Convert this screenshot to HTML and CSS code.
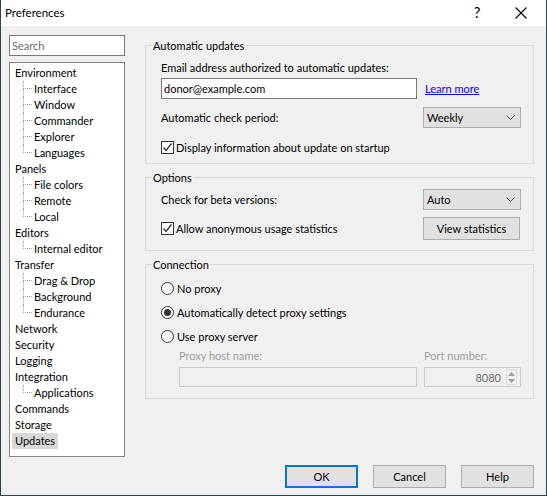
FILE: index.html
```html
<!DOCTYPE html>
<html>
<head>
<meta charset="utf-8">
<title>Preferences</title>
<link rel="stylesheet" href="styles.css">
</head>
<body>
<div class="window">
  <div class="titlebar">
    <span class="title">Preferences</span>
    <span class="tb-help">?</span>
    <span class="tb-close"><svg width="12" height="12" viewBox="0 0 12 12"><path d="M0.5 0.5 L11.5 11.5 M11.5 0.5 L0.5 11.5" stroke="#000" stroke-width="1.1" fill="none"/></svg></span>
  </div>
  <div class="main">
    <div class="sidebar">
      <div class="search">Search</div>
      <div class="tree">
        <div class="node"><span class="lbl">Environment</span></div>
        <div class="node child"><span class="conn"><span class="c-top"></span><span class="c-bot"></span></span><span class="lbl">Interface</span></div>
        <div class="node child"><span class="conn"><span class="c-top"></span><span class="c-bot"></span></span><span class="lbl">Window</span></div>
        <div class="node child"><span class="conn"><span class="c-top"></span><span class="c-bot"></span></span><span class="lbl">Commander</span></div>
        <div class="node child"><span class="conn"><span class="c-top"></span><span class="c-bot"></span></span><span class="lbl">Explorer</span></div>
        <div class="node child last"><span class="conn"><span class="c-top"></span><span class="c-bot"></span></span><span class="lbl">Languages</span></div>
        <div class="node"><span class="lbl">Panels</span></div>
        <div class="node child"><span class="conn"><span class="c-top"></span><span class="c-bot"></span></span><span class="lbl">File colors</span></div>
        <div class="node child"><span class="conn"><span class="c-top"></span><span class="c-bot"></span></span><span class="lbl">Remote</span></div>
        <div class="node child last"><span class="conn"><span class="c-top"></span><span class="c-bot"></span></span><span class="lbl">Local</span></div>
        <div class="node"><span class="lbl">Editors</span></div>
        <div class="node child last"><span class="conn"><span class="c-top"></span><span class="c-bot"></span></span><span class="lbl">Internal editor</span></div>
        <div class="node"><span class="lbl">Transfer</span></div>
        <div class="node child"><span class="conn"><span class="c-top"></span><span class="c-bot"></span></span><span class="lbl">Drag &amp; Drop</span></div>
        <div class="node child"><span class="conn"><span class="c-top"></span><span class="c-bot"></span></span><span class="lbl">Background</span></div>
        <div class="node child last"><span class="conn"><span class="c-top"></span><span class="c-bot"></span></span><span class="lbl">Endurance</span></div>
        <div class="node"><span class="lbl">Network</span></div>
        <div class="node"><span class="lbl">Security</span></div>
        <div class="node"><span class="lbl">Logging</span></div>
        <div class="node"><span class="lbl">Integration</span></div>
        <div class="node child last"><span class="conn"><span class="c-top"></span><span class="c-bot"></span></span><span class="lbl">Applications</span></div>
        <div class="node"><span class="lbl">Commands</span></div>
        <div class="node"><span class="lbl">Storage</span></div>
        <div class="node"><span class="lbl selected">Updates</span></div>
      </div>
    </div>
    <div class="content">
      <fieldset class="group g1">
        <legend>Automatic updates</legend>
        <div class="gbody">
          <div class="email-label">Email address authorized to automatic updates:</div>
          <div class="email-row">
            <div class="textbox email">donor@example.com</div>
            <a class="link" href="#">Learn more</a>
          </div>
          <div class="row period-row">
            <span>Automatic check period:</span>
            <div class="combo"><span>Weekly</span><svg width="9" height="5" viewBox="0 0 9 5"><path d="M0.5 0.5 L4.5 4.5 L8.5 0.5" stroke="#5a5a5a" stroke-width="1" fill="none"/></svg></div>
          </div>
          <div class="check-row">
            <span class="checkbox"><svg width="11" height="11" viewBox="0 0 11 11"><path d="M1.5 5.5 L4 8.5 L9.5 1.5" stroke="#333" stroke-width="1.3" fill="none"/></svg></span>
            <span>Display information about update on startup</span>
          </div>
        </div>
      </fieldset>
      <fieldset class="group g2">
        <legend>Options</legend>
        <div class="gbody">
          <div class="row beta-row">
            <span>Check for beta versions:</span>
            <div class="combo"><span>Auto</span><svg width="9" height="5" viewBox="0 0 9 5"><path d="M0.5 0.5 L4.5 4.5 L8.5 0.5" stroke="#5a5a5a" stroke-width="1" fill="none"/></svg></div>
          </div>
          <div class="row stats-row">
            <div class="check-row inline">
              <span class="checkbox"><svg width="11" height="11" viewBox="0 0 11 11"><path d="M1.5 5.5 L4 8.5 L9.5 1.5" stroke="#333" stroke-width="1.3" fill="none"/></svg></span>
              <span>Allow anonymous usage statistics</span>
            </div>
            <div class="button stats-btn">View statistics</div>
          </div>
        </div>
      </fieldset>
      <fieldset class="group g3">
        <legend>Connection</legend>
        <div class="gbody">
          <div class="radio-row first"><span class="radio"></span><span>No proxy</span></div>
          <div class="radio-row"><span class="radio on"><span class="dot"></span></span><span>Automatically detect proxy settings</span></div>
          <div class="radio-row"><span class="radio"></span><span>Use proxy server</span></div>
          <div class="proxy-grid">
            <span class="dis-label">Proxy host name:</span>
            <span class="dis-label">Port number:</span>
            <div class="textbox disabled"></div>
            <div class="textbox disabled port">
              <span class="port-val">8080</span>
              <span class="spin">
                <svg width="7" height="4" viewBox="0 0 7 4"><path d="M0 4 L3.5 0 L7 4 Z" fill="#a0a0a0"/></svg>
                <svg width="7" height="4" viewBox="0 0 7 4"><path d="M0 0 L3.5 4 L7 0 Z" fill="#a0a0a0"/></svg>
              </span>
            </div>
          </div>
        </div>
      </fieldset>
    </div>
  </div>
  <div class="buttons">
    <div class="button dlg default">OK</div>
    <div class="button dlg">Cancel</div>
    <div class="button dlg">Help</div>
  </div>
</div>
</body>
</html>
```

FILE: styles.css
```css
* { box-sizing: border-box; }
html, body { margin: 0; padding: 0; }
body {
  font-family: Lato, "Liberation Sans", sans-serif;
  font-size: 11px;
  line-height: 15px;
  color: #000;
  background: #fff;
}
.window {
  width: 547px;
  height: 496px;
  background: #f0f0f0;
  border: 1px solid #2e4451;
  border-top: none;
  display: flex;
  flex-direction: column;
}
.titlebar {
  height: 26px;
  background: #fff;
  display: flex;
  align-items: center;
  padding-left: 4px;
  font-size: 11.5px;
}
.title { flex: 1; padding-bottom: 1px; }
.tb-help {
  font-size: 15px;
  width: 46px;
  text-align: center;
  margin-right: 0;
  padding-bottom: 1px;
}
.tb-close {
  width: 46px;
  display: flex;
  justify-content: center;
  align-items: center;
  padding-right: 4px;
}
.main {
  display: flex;
  padding: 9px 0 0 8px;
  height: 431px;
}
.sidebar {
  width: 116px;
  display: flex;
  flex-direction: column;
}
.search {
  height: 21px;
  border: 1px solid #7a7a7a;
  background: #fff;
  color: #6d6d6d;
  padding: 2px 0 0 2px;
}
.tree {
  margin-top: 6px;
  height: 395px;
  border: 1px solid #828282;
  background: #fff;
  padding: 2px 0 0 2px;
}
.node {
  display: flex;
  height: 16px;
  align-items: center;
}
.lbl {
  padding: 0 3px;
  height: 16px;
  line-height: 16px;
}
.lbl.selected { background: #d9d9d9; }
.child .lbl { padding-left: 2px; }
.conn {
  margin-left: 11px;
  width: 9px;
  height: 16px;
  display: flex;
  flex-direction: column;
}
.c-top {
  height: 8px;
  border-left: 1px dotted #a0a0a0;
  border-bottom: 1px dotted #a0a0a0;
}
.c-bot {
  height: 8px;
  border-left: 1px dotted #a0a0a0;
}
.last .c-bot { border-left-color: transparent; }
.content {
  margin-left: 20px;
  width: 389px;
  padding-top: 3px;
}
.group {
  margin: 0;
  padding: 0;
  border: 1px solid #dcdcdc;
  min-width: 0;
}
.group legend {
  margin-left: 6px;
  padding: 0 1px;
  line-height: 15px;
}
.g2, .g3 { margin-top: 6px; }
.gbody { padding: 0 12px 8px 15px; }
.email-label { margin-top: 7px; }
.email-row {
  margin-top: 3px;
  display: flex;
  align-items: center;
}
.textbox {
  border: 1px solid #7a7a7a;
  background: #fff;
  height: 21px;
  padding: 2px 0 0 2px;
}
.email { width: 256px; }
.link {
  margin-left: 8px;
  color: #0000ff;
  text-decoration: underline;
}
.row {
  display: flex;
  justify-content: space-between;
  align-items: center;
}
.period-row { margin-top: 8px; }
.combo {
  width: 98px;
  height: 21px;
  background: #e1e1e1;
  border: 1px solid #adadad;
  display: flex;
  align-items: center;
  justify-content: space-between;
  padding: 0 5px 0 3px;
}
.combo svg { margin-bottom: 1px; }
.check-row {
  margin-top: 12px;
  display: flex;
  align-items: center;
  height: 15px;
}
.check-row.inline { margin-top: 0; }
.checkbox {
  width: 13px;
  height: 13px;
  border: 1px solid #333;
  background: #fff;
  margin-right: 2px;
  display: flex;
  align-items: center;
  justify-content: center;
}
.g1 .gbody { padding-bottom: 8px; }
.beta-row { margin-top: 4px; }
.stats-row { margin-top: 7px; }
.g2 .gbody { padding-bottom: 10px; }
.button {
  background: #e1e1e1;
  border: 1px solid #adadad;
  display: flex;
  align-items: center;
  justify-content: center;
  height: 23px;
}
.stats-btn { width: 97px; margin-right: 1px; }
.radio-row {
  display: flex;
  align-items: center;
  height: 16px;
  margin-top: 8px;
}
.radio {
  width: 13px;
  height: 13px;
  border: 1px solid #333;
  border-radius: 50%;
  background: #fff;
  margin-right: 3px;
  display: flex;
  align-items: center;
  justify-content: center;
}
.radio .dot {
  width: 7px;
  height: 7px;
  border-radius: 50%;
  background: #333;
}
.proxy-grid {
  margin-top: 4px;
  margin-left: 18px;
  display: grid;
  grid-template-columns: 238px 97px;
  column-gap: 7px;
  row-gap: 4px;
}
.dis-label { color: #a0a0a0; }
.textbox.disabled {
  height: 20px;
  background: #f0f0f0;
  border-color: #cccccc;
}
.port {
  display: flex;
  align-items: center;
  justify-content: flex-end;
  padding: 0 3px 0 0;
  color: #6d6d6d;
}
.port-val { margin-right: 5px; }
.spin {
  width: 11px;
  height: 16px;
  display: flex;
  flex-direction: column;
  align-items: center;
  justify-content: space-around;
  border: 1px solid #e0e0e0;
}
.g3 .gbody { padding-bottom: 11px; }
.buttons {
  margin-top: 8px;
  display: flex;
  justify-content: flex-end;
  gap: 15px;
  padding-right: 12px;
}
.dlg { width: 73px; }
.default { border: 2px solid #0078d7; }
```
